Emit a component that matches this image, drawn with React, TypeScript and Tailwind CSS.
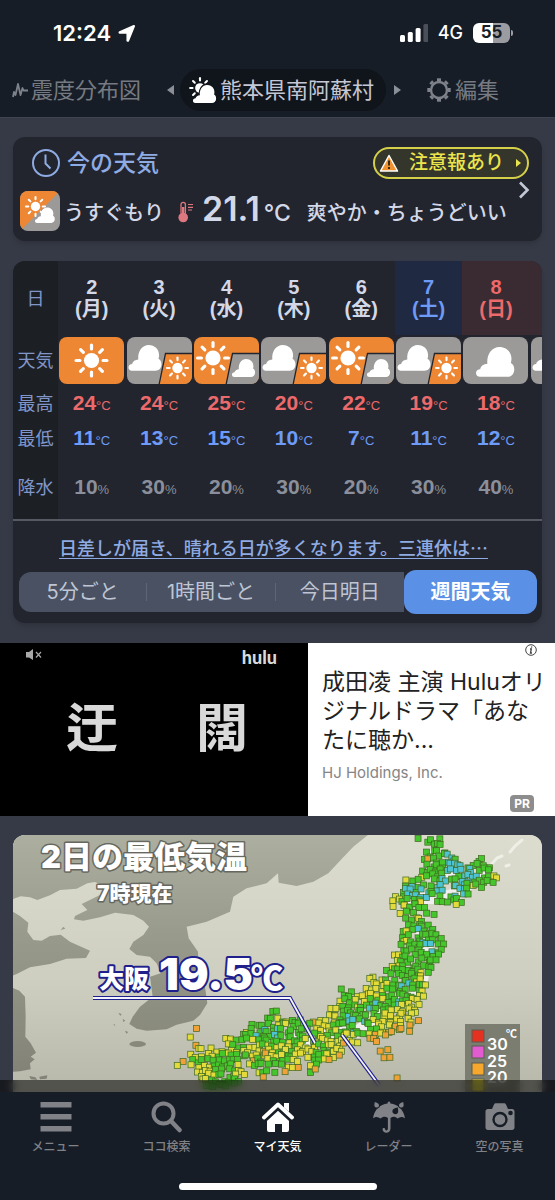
import React from 'react';

type Sky = 'sun' | 'cloud' | 'cloudSun' | 'sunCloud';

interface Day {
  date: number;
  weekday: string;
  sky: Sky;
  high: number;
  low: number;
  rain: number;
  kind?: 'sat' | 'holiday';
}

const days: Day[] = [
  { date: 2, weekday: '月', sky: 'sun', high: 24, low: 11, rain: 10 },
  { date: 3, weekday: '火', sky: 'cloudSun', high: 24, low: 13, rain: 30 },
  { date: 4, weekday: '水', sky: 'sunCloud', high: 25, low: 15, rain: 20 },
  { date: 5, weekday: '木', sky: 'cloudSun', high: 20, low: 10, rain: 30 },
  { date: 6, weekday: '金', sky: 'sunCloud', high: 22, low: 7, rain: 20 },
  { date: 7, weekday: '土', sky: 'cloudSun', high: 19, low: 11, rain: 30, kind: 'sat' },
  { date: 8, weekday: '日', sky: 'cloud', high: 18, low: 12, rain: 40, kind: 'holiday' },
];

const ranges = ['5分ごと', '1時間ごと', '今日明日', '週間天気'];

const ORANGE = '#ee8733';
const GRAY = '#9b9a99';

const Sun = ({ x, y, s = 1, color = '#fff' }: { x: number; y: number; s?: number; color?: string }) => (
  <g transform={`translate(${x} ${y}) scale(${s})`} stroke={color} fill={color}>
    <circle r="7.6" stroke="none" />
    {[0, 45, 90, 135, 180, 225, 270, 315].map((a) => (
      <path key={a} d="M0-11.6V-15.4" strokeWidth="3.2" strokeLinecap="round" transform={`rotate(${a})`} />
    ))}
  </g>
);

const Cloud = ({ x, y, s = 1 }: { x: number; y: number; s?: number }) => (
  <path
    transform={`translate(${x} ${y}) scale(${s})`}
    fill="#fff"
    d="M3.4 25.7C1.4 25.7 0 24.2 0 22.4c0-2 1.6-3.2 3.6-3.3.6-2.7 3-4.5 6.2-4.6C9 6.500 13.500 0 20.200 0c6 0 10.300 4.300 10.400 10 0 1.500-.2 2.600-.6 3.700 1.900.9 3 3 3 5.600 0 3.800-2.600 6.400-6 6.400z"
  />
);

const SkyIcon = ({ sky }: { sky: Sky }) => {
  const base = sky === 'sun' || sky === 'sunCloud' ? ORANGE : GRAY;
  return (
    <svg viewBox="0 0 65 47" className="mx-auto block h-[47px] w-[65px] overflow-hidden rounded-lg" aria-hidden="true">
      <rect width="65" height="47" fill={base} />
      {sky === 'sun' && <Sun x={32.5} y={23.500} />}
      {sky === 'cloud' && <Cloud x={13} y={10} s={1.16} />}
      {sky === 'cloudSun' && (
        <>
          <Cloud x={1.5} y={8} />
          <path d="M38.500 16.500H66V48H32z" fill={ORANGE} stroke="#22252d" strokeWidth="1.300" />
          <Sun x={50.500} y={31} s={0.68} />
        </>
      )}
      {sky === 'sunCloud' && (
        <>
          <Sun x={19} y={21} />
          <path d="M38.500 16.500H66V48H32z" fill={GRAY} stroke="#22252d" strokeWidth="1.300" />
          <Cloud x={38} y={22} s={0.7} />
        </>
      )}
    </svg>
  );
};

const StatusBar = () => (
  <div className="flex h-[66px] items-center justify-between pr-[42px] pl-[53px] text-white">
    <div className="flex items-center gap-1.5 text-[22px] font-semibold">
      12:24
      <svg viewBox="-1 -1 20 20" className="size-[19px]" fill="#fff" stroke="#fff" strokeWidth="1.500" strokeLinejoin="round" aria-hidden="true">
        <path d="M16.700.8c.3-.1.600.2.500.5L11 16.500c-.3.700-1.300.5-1.300-.2V9.300c0-.4-.3-.7-.7-.7H2c-.8 0-.9-1-.2-1.300z" />
      </svg>
    </div>
    <div className="flex items-center gap-2.5">
      <svg viewBox="0 0 28 18" className="h-[18px] w-7" aria-hidden="true">
        <rect x="0" y="11" width="5" height="7" rx="1.500" fill="#fff" />
        <rect x="7.800" y="8" width="5" height="10" rx="1.500" fill="#fff" />
        <rect x="15.600" y="4" width="5" height="14" rx="1.500" fill="#fff" />
        <rect x="23.400" y="0" width="5" height="18" rx="1.500" fill="#4a4f58" />
      </svg>
      <span className="text-lg font-medium">4G</span>
      <div className="flex items-center gap-px">
        <span className="flex h-5 w-[37px] items-center justify-center rounded-md bg-linear-to-r from-white from-55% to-[#9a9ca1] to-55% text-[17px] font-bold text-[#171d26]">
          55
        </span>
        <span className="h-1.5 w-0.5 rounded-r bg-[#9a9ca1]" />
      </div>
    </div>
  </div>
);

const LocationTabs = () => (
  <nav className="flex h-12 items-center pl-3 text-[22px] leading-8 text-[#767a82]">
    <a href="#shindo" className="flex shrink-0 items-center gap-[3px] whitespace-nowrap">
      <svg viewBox="0 0 16 16" className="size-4" fill="none" stroke="#7e828a" strokeWidth="1.800" strokeLinejoin="round" aria-hidden="true">
        <path d="M1 15l1-5 1.500 3L6 2l2.500 11L10.500 6l1 2.500H16" />
      </svg>
      震度分布図
    </a>
    <button aria-label="前の地点" className="ml-6 px-0.5">
      <svg viewBox="0 0 7 10" className="h-2.5 w-[7px]" fill="#8b8f97" aria-hidden="true">
        <path d="M7 0v10L0 5z" />
      </svg>
    </button>
    <a href="#spot" className="ml-1 flex h-[42px] shrink-0 items-center rounded-full bg-[#10141b] pr-3 pl-2 whitespace-nowrap text-[#c4c8d4]">
      <svg viewBox="0 0 30 28" className="mr-0.5 h-7 w-[30px]" aria-hidden="true">
        <Sun x={12} y={12} s={0.64} />
        <g stroke="#10141b" strokeWidth="2.500">
          <Cloud x={4.500} y={8.500} s={0.73} />
        </g>
        <Cloud x={5} y={9} s={0.7} />
      </svg>
      熊本県南阿蘇村
    </a>
    <button aria-label="次の地点" className="ml-1.5 px-0.5">
      <svg viewBox="0 0 7 10" className="h-2.5 w-[7px]" fill="#8b8f97" aria-hidden="true">
        <path d="M0 0v10l7-5z" />
      </svg>
    </button>
    <a href="#edit" className="ml-6 flex shrink-0 items-center gap-1 whitespace-nowrap">
      <svg viewBox="-12 -12 24 24" className="size-6" fill="none" stroke="#7e828a" aria-hidden="true">
        <circle r="8" strokeWidth="2.400" />
        {[0, 45, 90, 135, 180, 225, 270, 315].map((a) => (
          <path key={a} d="M0-9V-11.700" strokeWidth="4" transform={`rotate(${a})`} />
        ))}
      </svg>
      編集
    </a>
  </nav>
);

const CurrentWeather = () => (
  <section className="relative mx-[13px] rounded-xl bg-[#22252d] pt-2 pr-[13px] pb-2 pl-[7px] shadow-md">
    <div className="flex h-9 items-center justify-between pl-3">
      <h2 className="flex items-center gap-[7px] text-[23px] font-medium text-[#8fabe3]">
        <svg viewBox="0 0 28 28" className="size-7" fill="none" stroke="#8fabe3" strokeWidth="2" aria-hidden="true">
          <circle cx="14" cy="14" r="13" />
          <path d="M13.500 5.500v9l5 5" />
        </svg>
        今の天気
      </h2>
      <a href="#warning" className="flex h-8 w-[156px] items-center gap-2.5 rounded-full border-2 border-[#d5d049] bg-[#35362b] px-1 text-[19px] font-medium text-[#ebe54d]">
        <svg viewBox="0 0 20 18" className="h-[18px] w-5 shrink-0" aria-hidden="true">
          <path d="M10 1.500L18.500 17h-17z" fill="#f0932f" stroke="#fff" strokeWidth="1.500" strokeLinejoin="round" />
          <path d="M10 6.500v5M10 13v2" stroke="#2b2013" strokeWidth="1.800" />
        </svg>
        <span className="grow whitespace-nowrap">注意報あり</span>
        <svg viewBox="0 0 5 8" className="mr-0.5 h-2 w-[5px] shrink-0" fill="#ebe54d" aria-hidden="true">
          <path d="M0 0v8l5-4z" />
        </svg>
      </a>
    </div>
    <div className="mt-1 flex h-12 items-center text-xl font-medium whitespace-nowrap text-[#d3d8e8]">
      <svg viewBox="0 0 40 40" className="mt-1 size-10 shrink-0 rounded-lg" aria-hidden="true">
        <rect width="40" height="40" fill={GRAY} />
        <path d="M0 0h40L0 40z" fill={ORANGE} />
        <Sun x={15.500} y={15.500} s={0.62} />
        <Cloud x={15} y={16.500} s={0.6} />
      </svg>
      <span className="mt-2 ml-1">うすぐもり</span>
      <svg viewBox="0 0 16 22" className="mt-1.5 ml-3.5 h-[22px] w-4 shrink-0" fill="none" stroke="#dd7880" aria-hidden="true">
        <path d="M3 12.500V3.500a2.200 2.200 0 0 1 4.400 0v9" strokeWidth="1.300" />
        <path d="M5.200 6v8" strokeWidth="2.400" />
        <circle cx="5.200" cy="16.500" r="4.800" fill="#dd7880" stroke="none" />
        <path d="M10 3.500h5M10 6.300h5M10 9h4" strokeWidth="1.200" />
      </svg>
      <span className="ml-2 text-[34px] font-semibold">21.1</span>
      <span className="mt-2 ml-1 text-[23px]">°C</span>
      <span className="mt-2 ml-4">爽やか・ちょうどいい</span>
    </div>
    <a href="#now" aria-label="今の天気の詳細" className="absolute top-11 right-3">
      <svg viewBox="0 0 12 18" className="h-[18px] w-3" fill="none" stroke="#c3c8d6" strokeWidth="2.600" aria-hidden="true">
        <path d="M2 1.500L9.500 9 2 16.500" />
      </svg>
    </a>
  </section>
);

const rowHead = 'w-[45px] bg-[#1c2025] p-0 text-[18px] font-normal text-[#8096cb]';
const value = "p-0 text-center font-['Liberation_Sans'] text-[21px] font-bold";
const unit = 'text-[13px] font-normal';

const dayTone = (kind?: 'sat' | 'holiday') => {
  if (kind === 'sat') return 'bg-[#1f2a42] text-[#6d9bf7]';
  if (kind === 'holiday') return 'bg-[#392b31] text-[#ec6a6b]';
  return 'text-[#d3d8e8]';
};

const WeeklyForecast = () => (
  <section className="mx-[13px] mt-5 rounded-xl bg-[#22252d] shadow-md">
    <div className="overflow-hidden rounded-t-xl border-b-2 border-[#555961]">
      <table className="w-[584px] table-fixed border-collapse">
        <thead>
          <tr className="h-[74px]">
            <th scope="row" className={rowHead}>日</th>
            {days.map((d) => (
              <th key={d.date} scope="col" className={`p-0 font-['Liberation_Sans','Noto_Sans_CJK_JP',sans-serif] text-xl leading-[22px] font-bold ${dayTone(d.kind)}`}>
                {d.date}
                <br />({d.weekday})
              </th>
            ))}
            <th className="bg-[#392b31]" />
          </tr>
        </thead>
        <tbody>
          <tr className="h-[50px]">
            <th scope="row" className={rowHead}>天気</th>
            {days.map((d) => (
              <td key={d.date} className="p-0">
                <SkyIcon sky={d.sky} />
              </td>
            ))}
            <td className="p-0">
              <SkyIcon sky="cloudSun" />
            </td>
          </tr>
          <tr className="h-9">
            <th scope="row" className={rowHead}>最高</th>
            {days.map((d) => (
              <td key={d.date} className={`${value} text-[#ec6a6b]`}>
                {d.high}
                <span className={unit}>°C</span>
              </td>
            ))}
            <td />
          </tr>
          <tr className="h-[34px]">
            <th scope="row" className={rowHead}>最低</th>
            {days.map((d) => (
              <td key={d.date} className={`${value} text-[#6d9bf7]`}>
                {d.low}
                <span className={unit}>°C</span>
              </td>
            ))}
            <td />
          </tr>
          <tr className="h-16">
            <th scope="row" className={rowHead}>降水</th>
            {days.map((d) => (
              <td key={d.date} className={`${value} text-[#8b8f9b]`}>
                {d.rain}
                <span className={unit}>%</span>
              </td>
            ))}
            <td />
          </tr>
        </tbody>
      </table>
    </div>
    <a
      href="#outlook"
      className="block pt-3 pr-2 text-center font-['Noto_Sans_CJK_JP',sans-serif] text-lg leading-7 font-medium whitespace-nowrap text-[#8fabe3] underline underline-offset-3"
    >
      日差しが届き、晴れる日が多くなります。三連休は…
    </a>
    <div className="pt-[9px] pr-[5px] pb-[9px] pl-1.5">
      <div className="flex h-11 items-center">
        {ranges.map((r, i) =>
          i === 3 ? (
            <button key={r} aria-pressed="true" className="h-11 w-[133px] rounded-xl bg-[#5a91e6] text-xl font-bold text-white">
              {r}
            </button>
          ) : (
            <div key={r} className={`flex h-10 grow basis-0 items-center bg-[#495163] ${i === 0 ? 'rounded-l-xl' : ''}`}>
              <button aria-pressed="false" className="grow text-xl text-[#bfc5d3]">
                {r}
              </button>
              {i < 2 && <span className="h-[18px] w-px bg-[#5d6578]" />}
            </div>
          ),
        )}
      </div>
    </div>
  </section>
);

const HuluAd = () => (
  <aside className="mt-5 flex bg-white">
    <div className="flex w-[308px] flex-col bg-black text-[#d9d9d9]">
      <div className="flex justify-between pt-1.5 pr-[31px] pl-[25px]">
        <svg viewBox="0 0 18 12" className="h-3 w-[18px]" aria-hidden="true">
          <path d="M1 3h3l4-3v11L4 8.500H1z" fill="#a9a9a9" />
          <path d="M11 3l5 5.500M16 3l-5 5.500" stroke="#a9a9a9" strokeWidth="1.200" />
        </svg>
        <span className="font-['Lato'] text-lg leading-4 font-black">hulu</span>
      </div>
      <div className="flex gap-[78px] pt-6 pl-[66px] text-[52px] leading-[80px] font-bold">
        <span>迂</span>
        <span>闊</span>
      </div>
    </div>
    <div className="flex h-[173px] min-w-0 grow flex-col pl-3.5">
      <svg viewBox="0 0 12 12" className="mt-px mr-[18px] size-3 self-end" fill="none" stroke="#444" aria-hidden="true">
        <circle cx="6" cy="6" r="5.300" strokeWidth="1" />
        <path d="M6.700 2.500l-.2 1.200M5 5h1.300L5.500 9H7" strokeWidth="1.300" />
      </svg>
      <p className="mt-3 text-[23px] leading-[29px] whitespace-nowrap text-[#222]">
        成田凌 主演 Huluオリ
        <br />
        ジナルドラマ「あな
        <br />
        たに聴か...
      </p>
      <p className="mt-2 text-[15px] leading-5 text-[#858585]">HJ Holdings, Inc.</p>
      <span className="mt-auto mr-[21px] mb-1 self-end rounded bg-[#8d8d8d] px-1 text-xs leading-[17px] font-bold text-white">PR</span>
    </div>
  </aside>
);

// Observation points on a 5px lattice: [row, first column, one letter per cell]
const stations: [number, number, string][] = [
  [2, 48, 'G.GGG'],
  [3, 51, 'GGG'],
  [4, 50, 'GGGG'],
  [5, 51, 'GGGBB'],
  [6, 49, 'GOGGGBBG...GG'],
  [7, 50, 'GGGGBBBBGGGGG'],
  [8, 49, 'GGGGGBBBBBBGGG'],
  [9, 49, 'YGGGG..GBBBBGGYY'],
  [10, 46, 'YGG..GGBBGGBBGGGGG'],
  [11, 46, 'GBGG.GBB.GBBGYGG'],
  [12, 45, 'GBBGBBGBB..BBG'],
  [13, 44, 'YGBBBBBGG..GBBG'],
  [14, 43, 'YYGGGGY..GGGGGG'],
  [15, 43, 'Y.YGGG....'],
  [15, 45, 'YGGGG......Y'],
  [16, 46, 'GG'],
  [17, 45, 'Y..Y.GG'],
  [18, 46, 'GGYG'],
  [19, 46, 'GGGGG'],
  [20, 45, 'GYGBGGG'],
  [21, 45, 'GG.GGGGG'],
  [22, 45, 'YYGGBGGGG'],
  [23, 45, 'GGGGGBBGG'],
  [24, 45, 'GGGGG.BGG'],
  [25, 43, 'YYGG.GGGGG'],
  [26, 44, 'YGGGGGGGG'],
  [27, 43, 'YYG.GGGGG'],
  [28, 42, 'GGGGGGGYG'],
  [29, 39, 'Y...GGGGGGY'],
  [30, 38, 'YY.YGG.GGGYY'],
  [31, 40, 'YYYGGBBGGGY'],
  [32, 33, 'G.G..YYYYGGGGGGGY'],
  [33, 33, 'GG.YYYYYGGGGGGGYY'],
  [34, 32, 'YGG.YY.GGYGGBGGYY'],
  [35, 32, 'YGGGYGGGBGGGBYYYY'],
  [36, 31, 'YYGGGGGBBGGGYYYYYY'],
  [36, 19, 'GG'],
  [37, 30, 'YYYGBGGGGGGYYYYYYY'],
  [38, 29, 'YYYGGBBGBGYYYYYYYYYO'],
  [38, 18, 'GGYGYGGG.O'],
  [39, 28, 'YYYGGGGG..G.YYYYOYO'],
  [39, 15, 'GGGGGYGYGGGG'],
  [40, 28, 'YYYGYGGBG..GGYOOOOO'],
  [40, 14, 'YGGBGGBGGGGGG'],
  [40, 4, 'O'],
  [41, 28, 'GYG.GYYYGGYOOYO'],
  [41, 13, 'GGGBGGBBGGGGGYG'],
  [41, 3, 'Y'],
  [42, 10, 'YYGGGYGGGGGGYGGGYGYYYYYYYYY.OOO'],
  [43, 4, 'O.....YGGGYYYGYGYYYYGYYYGGYYYO'],
  [44, 4, 'YY.YYYYYYYY.YOYYGGYGYYYYGGGYYY.......OO'],
  [45, 3, 'YYYYYGGYGGGGYYYOYYYGGYYYGGGYYO........OO'],
  [46, 1, 'O.GGGGGGGGGG..OGGYGGGGYY..GGYO'],
  [47, 0, 'Y..YYYYGGGGGY.YGGGG.GGYYO..YG'],
  [48, 4, 'YYYYGGGGYY..YGGG..O........'],
  [48, 27, 'GO'],
  [49, 5, 'YYYGGGGYY...O.'],
  [49, 44, 'O'],
  [50, 5, 'YYGGGGGG'],
  [51, 6, 'GGGGGG'],
];

const stationColors: Record<string, string> = {
  G: '#45c62d',
  B: '#4dc4d4',
  Y: '#e3da3b',
  O: '#f0a237',
};

const wobble = (n: number) => {
  const v = Math.sin(n * 12.9898) * 43758.5453;
  return v - Math.floor(v);
};

const dots = stations.flatMap(([row, col, cells]) =>
  cells.split('').flatMap((c, i) => {
    if (c === '.') return [];
    const seed = row * 71 + col + i;
    return [{ x: (col + i) * 5 + wobble(seed) * 5 - 5, y: row * 5 + wobble(seed + 999) * 5 - 5, fill: stationColors[c] }];
  }),
);

const Leader = ({ d }: { d: string }) => (
  <g fill="none">
    <path d={d} stroke="#20208c" strokeWidth="4" />
    <path d={d} stroke="#f4f4ff" strokeWidth="1.800" />
  </g>
);

const TemperatureMap = () => (
  <section className="mx-[13px] mt-[19px] overflow-hidden rounded-xl bg-[#c6c7b8]">
    <svg viewBox="0 0 529 298" className="block w-full font-['Inter','Noto_Sans_CJK_JP',sans-serif]" role="img" aria-label="2日の最低気温 7時現在">
      <defs>
        <linearGradient id="sea" x1="0" y1="0" x2="0" y2="1">
          <stop offset="0" stopColor="#dcddce" />
          <stop offset=".5" stopColor="#cdcebf" />
          <stop offset="1" stopColor="#aeaea2" />
        </linearGradient>
        <linearGradient id="land" gradientUnits="userSpaceOnUse" x1="0" y1="0" x2="0" y2="760">
          <stop offset="0" stopColor="#adafa0" />
          <stop offset=".4" stopColor="#999b8c" />
          <stop offset="1" stopColor="#818275" />
        </linearGradient>
      </defs>
      <rect width="529" height="298" fill="url(#sea)" />
      <g transform="translate(-13 -5) scale(.33333)" fill="url(#land)">
        <path d="M30 0V212L45 205 62 199 90 202 112 210 150 196 180 180 230 176 262 160 284 156 320 170 300 195 245 222 262 240 225 258 222 268 250 272 300 262 345 248 400 255 430 272 447 290 430 315 400 335 388 357 410 375 450 380 470 400 482 430 450 440 458 500 420 530 398 560 388 582 410 596 440 602 500 598 530 584 580 572 600 555 622 520 612 450 595 400 594 365 566 325 560 290 620 275 690 245 700 200 740 175 800 160 834 130 836 158 890 168 940 155 985 130 1020 92 1060 50 1110 10V0z" />
        <path d="M30 240L60 258 85 278 82 305 100 330 125 332 150 318 182 314 210 335 270 362 258 384 200 386 150 402 90 412 50 432 30 440z" />
        <path d="M30 470L58 482 75 500 77 560 76 620 92 640 108 668 92 680 104 688 90 700 92 718 60 724 30 726z" />
        <ellipse cx="413" cy="642" rx="25" ry="9" />
        <path d="M355 548l10 4-4 6zM340 582l6 2-2 4zM368 566l8 6-6 4zM375 602l10 4-6 5zM182 300l8-10 6 6zM88 738l18 4 6 8-20-2zM118 740l24-4-2 10-20 2z" />
      </g>
      {/* Kuril islands */}
      <g stroke="#eeefe6" strokeWidth="3" strokeLinecap="round" fill="none">
        <path d="M476 32l8-9 5-2M497 17l5-6 7-6M493 31l3-1" />
      </g>
      {/* pale ground under the stations */}
      <g stroke="#f0eeee" strokeLinejoin="round" strokeLinecap="round" fill="none">
        <path d="M420 22l8 18 38 0-28 22-40 0" strokeWidth="14" />
        <path d="M406 88l8 28-6 32-20 14-42 34-56 8-40 6" strokeWidth="13" />
      </g>
      <g transform="translate(164 -5)" stroke="#3f6a20" strokeWidth=".7">
        {dots.map((p, i) => (
          <rect key={i} x={p.x} y={p.y} width="6" height="6" fill={p.fill} />
        ))}
      </g>

      <Leader d="M80 163H277L302 208" />
      <Leader d="M329 200L366 250" />

      <g fill="#fff" fontWeight="900" strokeLinejoin="round" paintOrder="stroke">
        <g stroke="#66675f" strokeWidth="3">
          <text x="28" y="33" fontSize="31">2日の最低気温</text>
          <text x="84" y="66" fontSize="21">7時現在</text>
        </g>
        <g stroke="#20208c" strokeWidth="4">
          <text x="86" y="153" fontSize="25">大阪</text>
          <text x="146" y="155" fontSize="44">19.5</text>
          <text x="238" y="155" fontSize="32" fontFamily="Noto Sans CJK JP">℃</text>
        </g>
      </g>

      <rect x="452" y="189" width="55" height="109" fill="#7c7d71" />
      <g stroke="#5b5b50" strokeWidth="1">
        <rect x="459" y="195" width="12" height="12" fill="#e5311f" />
        <rect x="459" y="211" width="12" height="12" fill="#e35bd0" />
        <rect x="459" y="228" width="12" height="12" fill="#f5a82d" />
        <rect x="459" y="244" width="12" height="12" fill="#e3da3b" />
      </g>
      <g fill="#fff" fontFamily="Inter" fontWeight="600" fontSize="16">
        <text x="474" y="215">30</text>
        <text x="474" y="232">25</text>
        <text x="474" y="248">20</text>
        <text x="493" y="203" fontSize="11" fontFamily="Noto Sans CJK JP">℃</text>
      </g>
    </svg>
  </section>
);

const MenuIcon = () => <path d="M0.500 1h31v5.500h-31zM0.500 13h31v5.500h-31zM0.500 25h31v5.500h-31z" />;

const SearchIcon = () => (
  <g fill="none" stroke="currentColor">
    <circle cx="12.500" cy="12.500" r="10" strokeWidth="4" />
    <path d="M20 20l8.500 9" strokeWidth="4.500" strokeLinecap="round" />
  </g>
);

const HomeIcon = () => (
  <>
    <path d="M22 2h5v9l-5-4.500z" />
    <path d="M2 16.500L16 3.500l14 13" fill="none" stroke="currentColor" strokeWidth="3.800" strokeLinecap="round" strokeLinejoin="round" />
    <path d="M5 18.500L16 8.500l11 10V29a2 2 0 0 1-2 2h-5v-8h-7v8H7a2 2 0 0 1-2-2z" />
    <path d="M3.500 20L16 8.600 28.500 20" fill="none" stroke="#171d26" strokeWidth="1.800" />
  </>
);

const UmbrellaIcon = () => (
  <>
    <path d="M16 .5c.9 0 1.400.7 1.400 2C25 3.200 31 9 32 17.500c-2-2-5-2-7.500 0-2-2-4.500-2.300-7-.6V27.500c0 5.500-8 5.500-8 .5 0-1.500 2.600-1.500 2.600 0 0 2 2.800 2 2.800-.5V16.900c-2.500-1.700-5-1.400-7.400.6-2.500-2-5.500-2-7.500 0C1 9 7 3.200 14.600 2.500c0-1.300.5-2 1.400-2z" />
    <g stroke="#171d26" strokeWidth="1.200">
      <path d="M1 .5c4 .5 6 2 5.500 4.500-.5 2.500-4.500 3-5.500.5-.6-1.500.2-3 0-5z" />
      <path d="M31 .5c-4 .5-6 2-5.500 4.500.5 2.500 4.500 3 5.500.5.6-1.500-.2-3 0-5z" />
    </g>
    <path d="M25 6.500c-4 .5-6 2-5.500 4.500.5 2.500 4.500 3 5.500.5.6-1.500-.2-3 0-5z" fill="#171d26" />
  </>
);

const CameraIcon = () => (
  <>
    <path d="M4 8h4l2-4.500c.4-.8 1-1.200 2-1.200h8c1 0 1.600.4 2 1.200L24 8h4c1.500 0 2.500 1 2.500 2.500v16c0 1.500-1 2.500-2.500 2.500H4c-1.500 0-2.500-1-2.500-2.500v-16C1.500 9 2.500 8 4 8z" />
    <circle cx="16" cy="18.500" r="6.500" fill="none" stroke="#171d26" strokeWidth="2.400" />
    <circle cx="26.500" cy="12" r="2.300" fill="#171d26" />
  </>
);

const navItems = [
  { label: 'メニュー', Icon: MenuIcon },
  { label: 'ココ検索', Icon: SearchIcon },
  { label: 'マイ天気', Icon: HomeIcon, active: true },
  { label: 'レーダー', Icon: UmbrellaIcon },
  { label: '空の写真', Icon: CameraIcon },
];

const BottomNav = () => (
  <nav className="relative h-[108px] shrink-0 bg-[#171d26]">
    <div className="absolute inset-x-0 -top-3 h-3 bg-black/55 backdrop-blur-xs" />
    <div className="grid grid-cols-5 pt-[9px]">
      {navItems.map(({ label, Icon, active }) => (
        <a key={label} href={`#${label}`} className={`flex flex-col items-center gap-1 text-xs leading-5 font-medium ${active ? 'text-white' : 'text-[#808287]'}`}>
          <svg viewBox="0 0 32 32" className="size-8" fill="currentColor" aria-hidden="true">
            <Icon />
          </svg>
          {label}
        </a>
      ))}
    </div>
    <div className="mx-auto mt-[26px] h-[7px] w-[198px] rounded-full bg-white" />
  </nav>
);

export default function App() {
  return (
    <div className="flex h-screen flex-col bg-[#363a46] font-['Inter','Noto_Sans_CJK_JP',sans-serif]" lang="ja">
      <header className="h-[118px] shrink-0 border-b border-[#3f4250] bg-[#171d26]">
        <StatusBar />
        <LocationTabs />
      </header>
      <main className="min-h-0 grow overflow-x-hidden overflow-y-auto pt-[19px] [scrollbar-width:none]">
        <CurrentWeather />
        <WeeklyForecast />
        <HuluAd />
        <TemperatureMap />
      </main>
      <BottomNav />
    </div>
  );
}
